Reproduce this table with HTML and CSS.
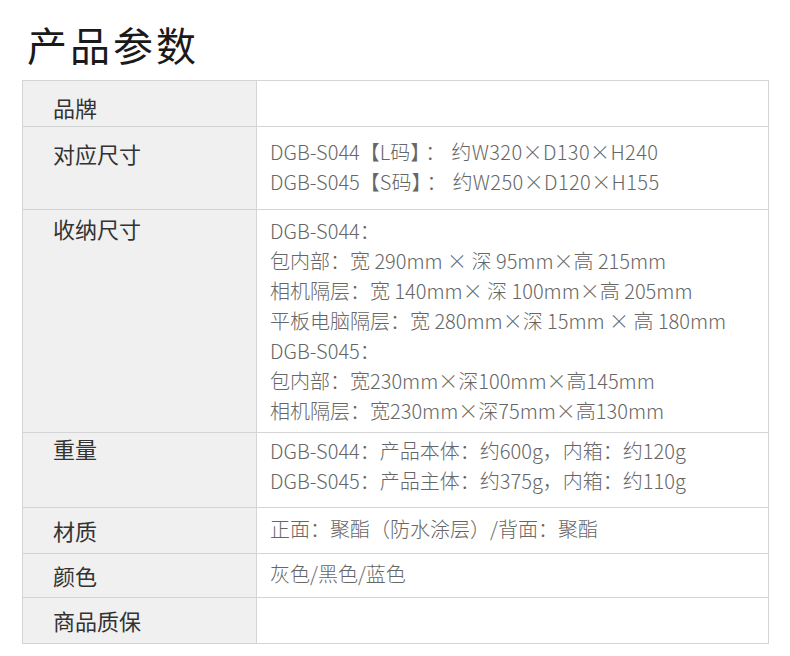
FILE: index.html
```html
<!DOCTYPE html>
<html lang="zh-CN">
<head>
<meta charset="utf-8">
<title>产品参数</title>
<link rel="stylesheet" href="styles.css">
</head>
<body>
<h1 class="title">产品参数</h1>
<div class="spec">
  <div class="row r1">
    <div class="label">品牌</div>
    <div class="value"></div>
  </div>
  <div class="row r2">
    <div class="label">对应尺寸</div>
    <div class="value">
      <div>DGB-S044【L码】<span class="colon">：</span><span class="dims">约W320×D130×H240</span></div>
      <div>DGB-S045【S码】<span class="colon">：</span><span class="dims">约W250×D120×H155</span></div>
    </div>
  </div>
  <div class="row r3">
    <div class="label">收纳尺寸</div>
    <div class="value">
      <div>DGB-S044：</div>
      <div>包内部：宽 290mm × 深 95mm×高 215mm</div>
      <div>相机隔层：宽 140mm× 深 100mm×高 205mm</div>
      <div>平板电脑隔层：宽 280mm×深 15mm × 高 180mm</div>
      <div>DGB-S045：</div>
      <div>包内部：宽230mm×深100mm×高145mm</div>
      <div>相机隔层：宽230mm×深75mm×高130mm</div>
    </div>
  </div>
  <div class="row r4">
    <div class="label">重量</div>
    <div class="value">
      <div>DGB-S044：产品本体：约600g，内箱：约120g</div>
      <div>DGB-S045：产品主体：约375g，内箱：约110g</div>
    </div>
  </div>
  <div class="row r5">
    <div class="label">材质</div>
    <div class="value">正面：聚酯（防水涂层）/背面：聚酯</div>
  </div>
  <div class="row r6">
    <div class="label">颜色</div>
    <div class="value">灰色/黑色/蓝色</div>
  </div>
  <div class="row r7">
    <div class="label">商品质保</div>
    <div class="value"></div>
  </div>
</div>
</body>
</html>
```

FILE: styles.css
```css
* {
  box-sizing: border-box;
}

body {
  margin: 0;
  padding: 24px 21px 0 22px;
  background: #ffffff;
  font-family: "Noto Sans CJK SC", "Noto Sans", sans-serif;
}

.title {
  margin: 0 0 16px;
  padding-left: 5px;
  font-size: 40px;
  line-height: 40px;
  font-weight: 400;
  letter-spacing: 3px;
  color: #1a1a1a;
}

.spec {
  border: 1px solid #d4d4d4;
}

.row {
  display: grid;
  grid-template-columns: 234px 1fr;
  border-top: 1px solid #d4d4d4;
  min-height: var(--h);
}

.row:first-child {
  border-top: 0;
  min-height: calc(var(--h) - 1px);
}

.label {
  background: #f0f0f0;
  border-right: 1px solid #d4d4d4;
  padding: var(--lp) 0 0 30px;
  font-size: 22px;
  line-height: 30px;
  color: #333333;
}

.value {
  padding: var(--vp) 8px 0 13px;
  font-size: 20px;
  line-height: 30px;
  font-weight: 300;
  color: #666666;
}

.colon {
  margin: 0 6px 0 5px;
}

.dims {
  letter-spacing: 0.4px;
}

.r1 { --h: 46px; --lp: 11px; --vp: 10px; }
.r2 { --h: 83px; --lp: 11px; --vp: 10px; }
.r3 { --h: 223px; --lp: 3px; --vp: 6px; }
.r4 { --h: 75px; --lp: 0px; --vp: 3px; }
.r5 { --h: 46px; --lp: 7px; --vp: 6px; }
.r6 { --h: 44px; --lp: 6px; --vp: 5px; }
.r7 { --h: 46px; --lp: 7px; --vp: 6px; }
```
